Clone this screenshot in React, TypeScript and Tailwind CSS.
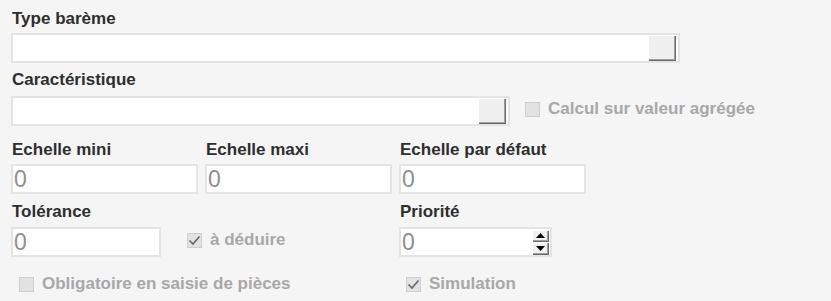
import React from 'react';

const font = { fontFamily: '"Liberation Sans", Arial, sans-serif' };

function Label({ children }: { children: React.ReactNode }) {
  return <div className="h-5 text-[17px] leading-5 font-bold text-[#2e2e2e] pl-[1px]">{children}</div>;
}

function Bevel({ className = '', children }: { className?: string; children?: React.ReactNode }) {
  return (
    <div
      className={`bg-[#f0f0f0] shadow-[inset_1px_1px_#ffffff,inset_-1px_-1px_#696969,inset_-2px_-2px_#a0a0a0] flex items-center justify-center ${className}`}
    >
      {children}
    </div>
  );
}

function LookupInput({ width }: { width: string }) {
  return (
    <div className={`${width} h-[30px] border-2 border-[#e4e4e4] bg-white flex items-stretch justify-end`}>
      <Bevel className="w-[28px] mr-[2px]" />
    </div>
  );
}

function NumInput({ width }: { width: string }) {
  return (
    <div className={`${width} h-[30px] border-2 border-[#e4e4e4] bg-white flex items-center`}>
      <span className="pl-[1px] text-[23px] leading-none text-[#8f8f8f]">0</span>
    </div>
  );
}

function SpinInput() {
  return (
    <div className="w-[153px] h-[30px] border-2 border-[#e4e4e4] bg-white flex items-center">
      <span className="flex-1 pl-[1px] text-[23px] leading-none text-[#8f8f8f]">0</span>
      <div className="flex flex-col w-[17px] mr-[1px]">
        <Bevel className="h-[12px]">
          <svg width="9" height="5" viewBox="0 0 9 5"><path d="M4.5 0L9 5H0z" fill="#000" /></svg>
        </Bevel>
        <Bevel className="h-[13px]">
          <svg width="9" height="5" viewBox="0 0 9 5"><path d="M0 0h9L4.5 5z" fill="#000" /></svg>
        </Bevel>
      </div>
    </div>
  );
}

function Check({ checked, label }: { checked?: boolean; label: string }) {
  return (
    <div className="flex items-center gap-[8px]">
      <div className="w-[15px] h-[15px] bg-[#e2e2e2] border border-[#cfcfcf] flex items-center justify-center">
        {checked && (
          <svg width="13" height="11" viewBox="0 0 13 11">
            <path d="M1.5 5.5L5 9L11.5 1.5" stroke="#6a6a6a" strokeWidth="1.7" fill="none" />
          </svg>
        )}
      </div>
      <span className="text-[17px] leading-5 font-bold text-[#a8a8a8]">{label}</span>
    </div>
  );
}

export default function App() {
  return (
    <div className="w-[831px] h-[301px] bg-[#f5f5f5] pl-[11px] pt-[9px] overflow-hidden" style={font}>
      <Label>Type barème</Label>
      <div className="mt-[4px]">
        <LookupInput width="w-[669px]" />
      </div>

      <div className="mt-[7px]">
        <Label>Caractéristique</Label>
      </div>
      <div className="mt-[6px] flex items-center">
        <LookupInput width="w-[499px]" />
        <div className="ml-[15px] -mt-[4px]">
          <Check label="Calcul sur valeur agrégée" />
        </div>
      </div>

      <div className="mt-[14px] flex">
        <div className="w-[194px]">
          <Label>Echelle mini</Label>
          <div className="mt-[4px]"><NumInput width="w-[187px]" /></div>
        </div>
        <div className="w-[194px]">
          <Label>Echelle maxi</Label>
          <div className="mt-[4px]"><NumInput width="w-[187px]" /></div>
        </div>
        <div className="w-[194px]">
          <Label>Echelle par défaut</Label>
          <div className="mt-[4px]"><NumInput width="w-[187px]" /></div>
        </div>
      </div>

      <div className="mt-[8px] flex">
        <div className="w-[388px]">
          <Label>Tolérance</Label>
          <div className="mt-[5px] flex items-center">
            <NumInput width="w-[150px]" />
            <div className="ml-[26px] -mt-[4px]">
              <Check checked label="à déduire" />
            </div>
          </div>
        </div>
        <div>
          <Label>Priorité</Label>
          <div className="mt-[5px]"><SpinInput /></div>
        </div>
      </div>

      <div className="mt-[17px] flex">
        <div className="w-[388px] pl-[8px]">
          <Check label="Obligatoire en saisie de pièces" />
        </div>
        <div className="pl-[7px]">
          <Check checked label="Simulation" />
        </div>
      </div>
    </div>
  );
}
